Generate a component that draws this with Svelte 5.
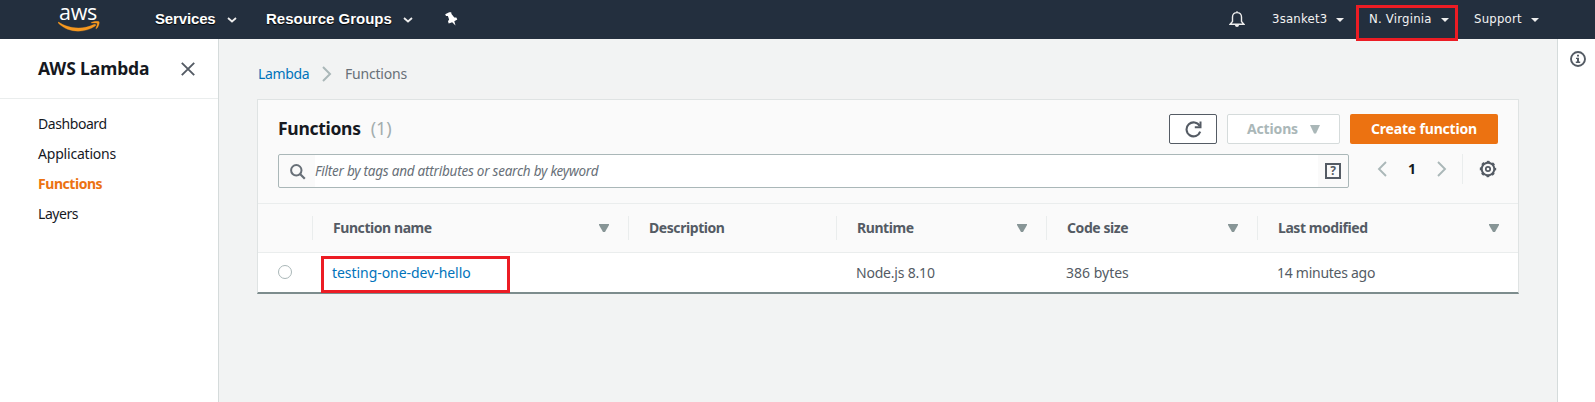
<script>
  const nav = ['Dashboard', 'Applications', 'Functions', 'Layers'];
  const columns = [
    { label: 'Function name', sort: true },
    { label: 'Description', sort: false },
    { label: 'Runtime', sort: true },
    { label: 'Code size', sort: true },
    { label: 'Last modified', sort: true }
  ];
</script>

<div class="page">
  <header class="topbar">
    <div class="logo">
      <span>aws</span>
      <svg width="42" height="11" viewBox="0 0 42 11"><path d="M.6 1.1C10 7.800 25 9 36.300 3.300 37.700 2.600 38.500 4.200 37.300 5 26 12.500 10 12 .2 2-.1 1.500.2.8.6 1.100ZM33.500 1.300C36 .2 40.500-.3 41.100.8 41.700 2.100 40.500 6 38.600 7.600 38.100 8 37.700 7.800 37.900 7.200 38.700 5.400 39.600 2.900 39 2.300 38.400 1.700 35.600 1.900 33.900 2.100 33.200 2.100 33 1.600 33.500 1.300Z" fill="#f7981f" stroke="#f7981f" stroke-width=".3"/></svg>
    </div>
    <div class="menu services"><span>Services</span>
      <svg class="chev" width="10" height="6" viewBox="0 0 10 6"><path d="m1 1 4 3.500L9 1" fill="none" stroke="#eee" stroke-width="1.800"/></svg>
    </div>
    <div class="menu groups"><span>Resource Groups</span>
      <svg class="chev" width="10" height="6" viewBox="0 0 10 6"><path d="m1 1 4 3.500L9 1" fill="none" stroke="#eee" stroke-width="1.800"/></svg>
    </div>
    <svg class="pin" width="13" height="14" viewBox="0 0 13 14"><path d="M4.200.2 6.200.3 6.500 2 9.300 5.400 11.300 5.600 12.300 7.600 9.300 9.200 10.500 13.500 7.200 10.200 3.700 11.500 3 9.300 4.100 7.600 2.900 4.100 1 4 .2 2.200Z" fill="#fff"/></svg>
    <div class="grow"></div>
    <svg class="bell" width="16" height="18" viewBox="0 0 16 18"><path d="M8 1.200v1.300M3.500 11.500V7C3.500 4 5.300 2.600 8 2.600S12.500 4 12.500 7v4.500l2.400 2.700H1.100Z" fill="none" stroke="#eee" stroke-width="1.400"/><path d="M5.800 14.800h4.400Q9.800 17 8 17t-2.200-2.200Z" fill="#eee"/></svg>
    <div class="account user">3sanket3<i></i></div>
    <div class="account region">N. Virginia<i></i><b class="mark"></b></div>
    <div class="account support">Support<i></i></div>
  </header>

  <div class="body">
    <aside class="side">
      <div class="side-head">
        <h1>AWS Lambda</h1>
        <svg width="14" height="14" viewBox="0 0 14 14"><path d="m.8.800 12.400 12.400M13.200.8.800 13.200" stroke="#545b64" stroke-width="1.900"/></svg>
      </div>
      <nav>
        {#each nav as item}
          <span class={item.toLowerCase()}>{item}</span>
        {/each}
      </nav>
    </aside>

    <main>
      <div class="crumbs">
        <span class="root">Lambda</span>
        <svg width="10" height="16" viewBox="0 0 10 16"><path d="m1 1 7 7-7 7" fill="none" stroke="#aab7b8" stroke-width="2"/></svg>
        <span>Functions</span>
      </div>
      <section class="card">
        <div class="tools">
          <div class="title-row">
            <h2>Functions</h2><span class="count">(1)</span>
            <div class="grow"></div>
            <button class="refresh" aria-label="Refresh">
              <svg width="17" height="17" viewBox="0 0 17 17"><path d="M15.200 10.600A7 7 0 1 1 14.700 5" fill="none" stroke="#545b64" stroke-width="2.100"/><path d="M15.500.5v5.800H9.800" fill="none" stroke="#545b64" stroke-width="2"/></svg>
            </button>
            <button class="actions"><span>Actions</span><svg width="10" height="9" viewBox="0 0 10 9"><path d="M0 0h10L6 8.500h-2Z" fill="#aab7b8"/></svg></button>
            <button class="create"><span>Create function</span></button>
          </div>
          <div class="search-row">
            <div class="search">
              <svg class="mag" width="16" height="16" viewBox="0 0 16 16"><circle cx="6.300" cy="6.300" r="5.200" fill="none" stroke="#687078" stroke-width="2"/><path d="m10 10 4.800 4.800" stroke="#687078" stroke-width="2.200"/></svg>
              <div class="field"><span>Filter by tags and attributes or search by keyword</span></div>
              <div class="help">?</div>
            </div>
            <svg class="prev" width="10" height="16" viewBox="0 0 10 16"><path d="M9 1 2 8l7 7" fill="none" stroke="#aab7b8" stroke-width="1.900"/></svg>
            <span class="num">1</span>
            <svg class="next" width="10" height="16" viewBox="0 0 10 16"><path d="m1 1 7 7-7 7" fill="none" stroke="#aab7b8" stroke-width="1.900"/></svg>
            <div class="rule"></div>
            <svg class="gear" width="18" height="18" viewBox="0 0 18 18"><circle cx="9" cy="9" r="6.300" fill="none" stroke="#545b64" stroke-width="2"/><circle cx="9" cy="9" r="7.400" fill="none" stroke="#545b64" stroke-width="1.600" stroke-dasharray="2.900 2.912" stroke-dashoffset="1.450"/><circle cx="9" cy="9" r="2.200" fill="none" stroke="#545b64" stroke-width="1.700"/></svg>
          </div>
        </div>
        <div class="grid thead">
          <div></div>
          {#each columns as col}
            <div class="th"><span>{col.label}</span>{#if col.sort}<svg width="10" height="8" viewBox="0 0 10 8"><path d="M0 0h10v1L6 8H4L0 1Z" fill="#879596"/></svg>{/if}</div>
          {/each}
        </div>
        <div class="grid row">
          <div class="pick"><span></span></div>
          <div class="name"><span>testing-one-dev-hello</span><b class="mark"></b></div>
          <div></div>
          <div class="run">Node.js 8.10</div>
          <div class="size">386 bytes</div>
          <div class="ago">14 minutes ago</div>
        </div>
      </section>
    </main>

    <aside class="info">
      <svg width="16" height="16" viewBox="0 0 16 16"><circle cx="8" cy="8" r="7" fill="none" stroke="#545b64" stroke-width="1.900"/><path d="M7 3.700h2v1.800H7ZM6 6.700h3v3.800h1.200V12H5.800v-1.500H7V8.100H6Z" fill="#545b64"/></svg>
    </aside>
  </div>
</div>

<style>
  :global(body) { margin: 0; }
  * { box-sizing: border-box; }
  svg { display: block; flex: none; }
  .page { width: 1595px; height: 402px; overflow: hidden; display: flex; flex-direction: column; background: #f2f3f3; color: #16191f; font: 14px/22px "Noto Sans", sans-serif; white-space: nowrap; }
  .grow { flex: 1; }
  .topbar { height: 39px; flex: none; background: #232f3e; display: flex; align-items: flex-start; color: #fff; }
  .logo { width: 42px; margin: 0 55px 0 58px; height: 32px; display: flex; flex-direction: column; justify-content: space-between; }
  .logo span { height: 20px; font: 500 21.500px/23px "Open Sans", sans-serif; letter-spacing: -.3px; margin-left: 1px; }
  .menu { display: flex; font: bold 15px/37px "Liberation Sans", Arial, sans-serif; justify-content: space-between; height: 39px; text-shadow: 0 1px 1px #000; }
  .services { width: 82px; letter-spacing: -.15px; }
  .groups { width: 147px; margin-left: 29px; }
  .chev { margin-top: 17px; }
  .pin { margin: 12px 0 0 32px; }
  .bell { margin: 10px 27px 0 0; }
  .account { position: relative; display: flex; justify-content: space-between; font: 13px/38px "DejaVu Sans Condensed", "DejaVu Sans", sans-serif; font-stretch: condensed; letter-spacing: .22px; color: #f3f3f3; }
  .account i { margin-top: 18px; border: 4px solid transparent; border-top-color: #eee; height: 0; }
  .user { width: 72px; margin-right: 25px; }
  .region { width: 80px; margin-right: 25px; }
  .support { width: 65px; margin-right: 56px; }
  .mark { position: absolute; border: 3px solid #ec1c24; }
  .region .mark { left: -13px; top: 5px; width: 102px; height: 36px; z-index: 2; }

  .body { display: flex; flex: 1; }
  .side { width: 219px; background: #fff; border-right: 1px solid #d5dbdb; }
  .side-head { height: 60px; border-bottom: 1px solid #eaeded; display: flex; justify-content: space-between; padding: 0 23px 0 38px; }
  .side-head svg { margin-top: 23px; }
  h1, h2 { margin: 0; font-size: 18px; font-weight: 700; line-height: 22px; }
  h1 { margin-top: 18px; font-size: 17.500px; letter-spacing: -.1px; }
  h2 { font-size: 17.500px; letter-spacing: -.3px; margin-top: -2px; }
  nav { padding: 14px 0 0 38px; display: flex; flex-direction: column; gap: 8px; }
  nav .dashboard { letter-spacing: -.43px; }
  nav .applications { letter-spacing: -.2px; }
  nav .functions { color: #ec7211; font-weight: 700; letter-spacing: -.45px; }
  nav .layers { letter-spacing: -.45px; }
  main { flex: 1; padding: 24px 38px 0 39px; }
  .crumbs { display: flex; height: 36px; color: #687078; letter-spacing: -.2px; }
  .crumbs .root, .name span { color: #0073bb; }
  .crumbs .root { width: 64px; letter-spacing: -.35px; }
  .crumbs svg { margin: 3px 13px 0 0; }
  .card { width: 1262px; height: 195px; margin-left: -1px; border: 1px solid #dfe3e3; border-bottom: 2px solid #7d8c8d; background: #fff; }
  .tools { height: 104px; background: #fafafa; border-bottom: 1px solid #eaeded; padding: 14px 20px 0; }
  .title-row { display: flex; height: 30px; align-items: center; }
  .count { color: #a3adae; font-size: 18px; margin: -2px 0 0 10px; }
  button { height: 30px; padding: 0; border-radius: 2px; display: flex; align-items: center; justify-content: center; font: 700 14px/20px "Noto Sans", sans-serif; }
  .refresh { width: 48px; background: #fff; border: 1px solid #545b64; margin-right: 10px; }
  .actions { width: 113px; background: #fff; border: 1px solid #d5dbdb; color: #aab7b8; gap: 12px; margin-right: 10px; letter-spacing: -.15px; }
  .create { width: 148px; background: #ec7211; border: 0; color: #fff; letter-spacing: -.18px; }
  .search-row { display: flex; margin-top: 10px; }
  .search { width: 1071px; height: 34px; border: 1px solid #aab7b8; border-radius: 2px; display: flex; }
  .mag { margin: 9px 10px 0 11px; }
  .field { flex: 1; background: #fff; color: #687078; font-size: 13.500px; font-style: italic; letter-spacing: -.23px; line-height: 33px; margin-left: -1px; margin-right: 7px; }
  .help { width: 16px; height: 16px; border: 2px solid #545b64; margin: 8px 7px 0 0; font: 700 12px/12px "Noto Sans", sans-serif; text-align: center; color: #545b64; }
  .prev { margin: 7px 0 0 28px; }
  .num { width: 50px; text-align: center; font-weight: 700; line-height: 30px; }
  .next { margin-top: 7px; }
  .rule { width: 1px; height: 30px; background: #eaeded; margin-left: 15px; }
  .gear { margin: 6px 0 0 16px; }
  .grid { display: grid; grid-template-columns: 54px 316px 208px 210px 211px 261px; }
  .thead { height: 49px; background: #fafafa; border-bottom: 1px solid #eaeded; padding-top: 12px; }
  .th { height: 24px; border-left: 1px solid #eaeded; display: flex; justify-content: space-between; padding: 0 19px 0 20px; color: #545b64; font-weight: 700; line-height: 24px; letter-spacing: -.43px; }
  .th svg { margin-top: 8px; }
  .row { height: 40px; color: #545b64; line-height: 40px; }
  .row > div { padding-left: 20px; height: 40px; }
  .pick span { display: block; width: 14px; height: 14px; margin-top: 12px; border: 1px solid #aab7b8; border-radius: 50%; }
  .name { position: relative; letter-spacing: -.05px; }
  .run { letter-spacing: -.2px; }
  .ago { letter-spacing: -.27px; }
  .name .mark { left: 9px; top: 3px; width: 189px; height: 37px; }
  .info { width: 38px; border-left: 1px solid #d5dbdb; background: #fff; padding: 12px 0 0 12px; }
</style>
